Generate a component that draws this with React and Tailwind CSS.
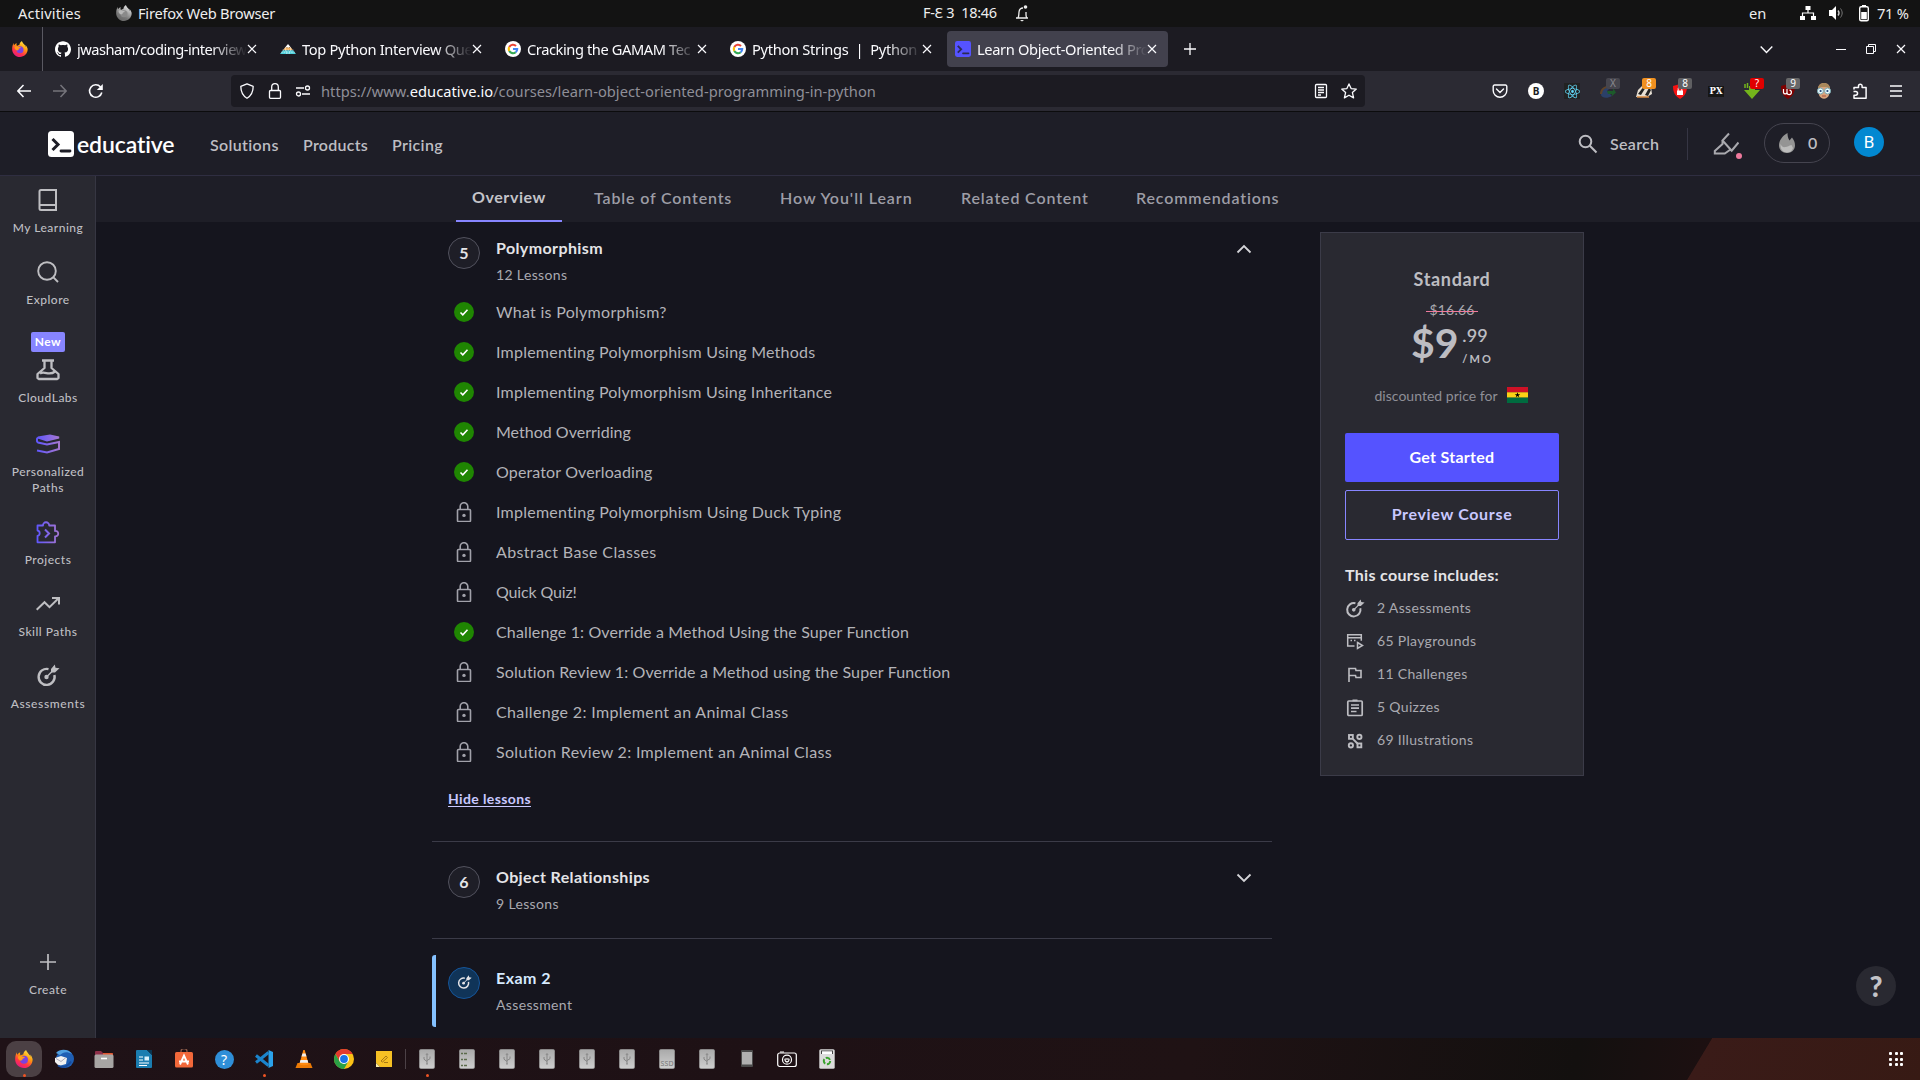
import React from "react";
import { SiReact, SiGithub } from "react-icons/si";

const lessons = [
  ["What is Polymorphism?", true, "tracking-[0.28px]"],
  ["Implementing Polymorphism Using Methods", true, "tracking-[0.23px]"],
  ["Implementing Polymorphism Using Inheritance", true, "tracking-[0.22px]"],
  ["Method Overriding", true, "tracking-[0.01px]"],
  ["Operator Overloading", true, "tracking-[0.13px]"],
  ["Implementing Polymorphism Using Duck Typing", false, "tracking-[0.25px]"],
  ["Abstract Base Classes", false, "tracking-[0.37px]"],
  ["Quick Quiz!", false, "tracking-[-0.14px]"],
  ["Challenge 1: Override a Method Using the Super Function", true, "tracking-[0.14px]"],
  ["Solution Review 1: Override a Method using the Super Function", false, "tracking-[0.13px]"],
  ["Challenge 2: Implement an Animal Class", false, "tracking-[0.36px]"],
  ["Solution Review 2: Implement an Animal Class", false, "tracking-[0.31px]"],
];

function Firefox({ className, gray }) {
  const id = gray ? "fxg" : "fxc";
  return (
    <svg viewBox="0 0 24 24" className={className}>
      <defs>
        <linearGradient id={id} x1="0.8" y1="0" x2="0.25" y2="1">
          <stop offset="0" stopColor={gray ? "#eeeeee" : "#fff44f"} />
          <stop offset="0.4" stopColor={gray ? "#aaaaaa" : "#ff980e"} />
          <stop offset="0.7" stopColor={gray ? "#777777" : "#ff3647"} />
          <stop offset="1" stopColor={gray ? "#666666" : "#e31587"} />
        </linearGradient>
      </defs>
      <path
        fill={`url(#${id})`}
        d="M22.5 9.5c-.5-1.500-1.600-3-2.500-3.500.7 1.300 1 2.500 1.100 3.300C19.800 6.100 17.300 4.800 15.500 1.500 15 .7 14.900.2 14.900 0c-2.800 1.600-3.800 4.600-3.900 6.100-1.300.1-2.500.6-3.500 1.300C6.600 6 6.600 4.300 7 3 5.300 3.800 4 5 3 6.200 2.500 5.600 2.500 3.500 2.600 3 1.700 4 .2 7.500.2 12.300.2 18.800 5.500 24 12 24c6 0 11.500-4.700 11.500-11.500 0-1-.4-2-1-3z"
      />
      <circle cx="12" cy="13" r="5.300" fill={gray ? "#8a8a8a" : "#7a42e0"} />
      <path fill={gray ? "#b8b8b8" : "#ff9a1a"} d="M4 8.500c2.500-1.300 5-.8 6.500.5 1 .1 2.300-.1 2.700.7-.3 1-2.500 1.500-3 2 .2 1.800-1.700 2-2.200 2.600C5 13.500 3.500 11 4 8.500z" />
    </svg>
  );
}

function Google({ className }) {
  return (
    <svg viewBox="0 0 16 16" className={className}>
      <circle cx="8" cy="8" r="8" fill="#fff" />
      <g fill="none" strokeWidth="2.100">
        <path stroke="#ea4335" d="M4.300 6A4.200 4.200 0 0 1 11 5" />
        <path stroke="#fbbc05" d="M4.300 10a4.200 4.200 0 0 1 0-4" />
        <path stroke="#34a853" d="M4.300 10a4.200 4.200 0 0 0 6.400 1.200" />
        <path stroke="#4285f4" d="M8 8h4.200a4.200 4.200 0 0 1-1.500 3.200" />
      </g>
    </svg>
  );
}

function Pyramid({ className }) {
  return (
    <svg viewBox="0 0 16 16" className={className}>
      <path d="M8 3l2.500 3h-5z" fill="#fff" />
      <path d="M5.200 6.300h5.600l2 2.700H3.200z" fill="#f0b060" />
      <path d="M3 9.300h10l3 3.700H0z" fill="#4fd0dc" />
      <path d="M2.500 9.100h11M1.200 11.200h13.600M5 6.500h6M5 7l2 6M11 7L9 13" stroke="#fff" strokeWidth=".6" strokeDasharray="1.500 1" />
    </svg>
  );
}

function EducativeMark({ className, bg, fg }) {
  return (
    <svg viewBox="0 0 26 26" className={className}>
      <rect width="26" height="26" rx="3.500" fill={bg} />
      <path d="M4.500 8l5.500 5.500-5.500 5.500" fill="none" stroke={fg} strokeWidth="3" />
      <path d="M13 20h9" stroke={fg} strokeWidth="2.800" strokeLinecap="round" />
    </svg>
  );
}

function X({ className = "h-[10px] w-[10px]" }) {
  return (
    <svg viewBox="0 0 10 10" className={className} stroke="#fbfbfe" strokeWidth="1.200" fill="none">
      <path d="M1 1l8 8M9 1L1 9" />
    </svg>
  );
}

function Line({ children, className = "h-6 w-6", sw = 2, vb = "0 0 24 24" }) {
  return (
    <svg viewBox={vb} className={className} fill="none" stroke="currentColor" strokeWidth={sw}>
      {children}
    </svg>
  );
}

function Target({ className = "h-6 w-6" }) {
  return (
    <svg viewBox="0 0 24 24" className={className} fill="none" stroke="currentColor">
      <path d="M12.500 5.100A8 8 0 1 0 18.400 11" strokeWidth="2.400" />
      <circle cx="10.500" cy="13" r="2.200" fill="currentColor" stroke="none" />
      <path d="M10.500 13l6-6" strokeWidth="1.500" />
      <path d="M15 8.500V5l3.800-4.500.7 3.200 4 .6L19 8.500z" fill="currentColor" stroke="none" />
    </svg>
  );
}

function Tab({ icon, title, active, track }) {
  return (
    <div className={`flex h-9 w-[221px] items-center rounded pl-2 ${active ? "bg-[#42414d]" : ""}`}>
      {icon}
      <div
        className={`ml-[6px] w-[170px] whitespace-pre text-[14.67px] leading-6 text-[#fbfbfe] [mask-image:linear-gradient(to_right,black_79%,transparent_100%)] ${track}`}
      >
        {title}
      </div>
      <div className="ml-auto mr-[11px] shrink-0">
        <X />
      </div>
    </div>
  );
}

function SystemBar() {
  return (
    <div className="flex h-[27px] items-center bg-[#131313] pb-px text-[14.67px] text-[#eeeeee]">
      <div className="w-[98px] pl-[18px] tracking-[0.19px]">Activities</div>
      <div className="flex w-[824px] items-center pl-[18px]">
        <Firefox gray className="h-4 w-4" />
        <span className="ml-[6px] whitespace-nowrap tracking-[-0.25px]">Firefox Web Browser</span>
      </div>
      <div className="flex w-[827px] items-center whitespace-pre">
        <span className="w-[76px] pl-px text-[14.500px] tracking-[-0.3px]">F-Ɛ 3  18:46</span>
        <Line className="ml-[17px] h-[18px] w-[14px]" sw={1.300} vb="0 0 14 18">
          <path d="M1 14h12M3 14c1-2 .7-3 1-6 .3-2.500 1-4 4-4M11 8v3c0 1 .3 2 .8 3" />
          <circle cx="10.500" cy="3" r="1.800" fill="currentColor" stroke="none" />
          <path d="M5 16h4l-2 1.500z" fill="currentColor" stroke="none" />
        </Line>
      </div>
      <span className="w-[51px]">en</span>
      <svg viewBox="0 0 16 16" className="h-4 w-4" fill="#fff">
        <path d="M5.500 1h5v4h-5zM0 11h5v4H0zM11 11h5v4h-5z" />
        <path d="M8 5v3M2.500 11V8h11v3" stroke="#fff" strokeWidth="1.200" fill="none" />
      </svg>
      <svg viewBox="0 0 16 16" className="ml-3 h-4 w-4" fill="#fff">
        <path d="M1 5h3l4-4v14l-4-4H1z" />
        <path d="M10 5.500c1.300 1.500 1.300 3.500 0 5" stroke="#ccc" fill="none" strokeWidth="1.300" />
        <path d="M12.500 3.500c2.200 3 2.200 6 0 9" stroke="#777" fill="none" />
      </svg>
      <svg viewBox="0 0 12 18" className="ml-[14px] h-[18px] w-3" fill="none">
        <rect x="1.700" y="2.700" width="8.600" height="14" rx="1.500" stroke="#fff" strokeWidth="1.400" />
        <path d="M4 1h4v2H4zM3.200 8h5.600v7.300H3.200z" fill="#fff" />
      </svg>
      <span className="ml-[7px] whitespace-nowrap tracking-[-0.3px]">71 %</span>
    </div>
  );
}

function TabBar() {
  return (
    <div className="flex h-11 items-center bg-[#1c1b22]">
      <div className="flex h-full w-[43px] items-center border-r border-[#5a5962] pl-3">
        <Firefox className="h-4 w-4" />
      </div>
      <div className="ml-1 flex items-center gap-1">
        <Tab icon={<SiGithub className="h-4 w-4 shrink-0 text-white" />} title="jwasham/coding-interview" track="tracking-[-0.5px]" />
        <Tab icon={<Pyramid className="h-4 w-4 shrink-0" />} title="Top Python Interview Que" track="tracking-[-0.32px]" />
        <Tab icon={<Google className="h-4 w-4 shrink-0" />} title="Cracking the GAMAM Tec" track="tracking-[-0.42px]" />
        <Tab icon={<Google className="h-4 w-4 shrink-0" />} title="Python Strings  |  Python E" track="tracking-[-0.3px]" />
        <Tab active icon={<EducativeMark className="h-4 w-4 shrink-0" bg="#5553ff" fg="#2b2a55" />} title="Learn Object-Oriented Pro" track="tracking-[-0.35px]" />
      </div>
      <Line className="ml-4 h-3 w-3 text-[#fbfbfe]" sw={1.300} vb="0 0 12 12">
        <path d="M6 0v12M0 6h12" />
      </Line>
      <Line className="ml-auto h-[13px] w-[13px] text-[#fbfbfe]" sw={1.400} vb="0 0 13 13">
        <path d="M.7 3.500l5.800 6 5.800-6" />
      </Line>
      <div className="ml-[63px] h-px w-[10px] bg-[#fbfbfe]" />
      <Line className="ml-5 h-[10px] w-[10px] text-[#fbfbfe]" sw={1} vb="0 0 10 10">
        <path d="M.5 2.500h7v7h-7zM2.500 2.500v-2h7v7h-2" />
      </Line>
      <div className="ml-5 mr-[14px] h-[10px] w-[10px]">
        <X />
      </div>
    </div>
  );
}

function Ext({ children, badge, badgeClass = "" }) {
  return (
    <div className="relative flex h-5 w-9 items-center justify-center">
      {children}
      {badge && (
        <span className={`absolute -top-[3px] left-[16px] h-[11px] w-[14px] rounded-[2px] text-center text-[10px] leading-[11px] ${badgeClass}`}>
          {badge}
        </span>
      )}
    </div>
  );
}

function NavBar() {
  return (
    <div className="flex h-[41px] items-center border-b border-[#0c0c0d] bg-[#2b2a33] text-[#fbfbfe]">
      <div className="flex w-[231px] items-center gap-[22px] pl-[17px]">
        <Line className="h-[14px] w-[14px]" sw={1.500} vb="0 0 14 14">
          <path d="M14 7H1M6.500 1L.9 7l5.600 6" />
        </Line>
        <Line className="h-[14px] w-[14px] text-[#75747b]" sw={1.500} vb="0 0 14 14">
          <path d="M0 7h13M7.500 1l5.600 6-5.600 6" />
        </Line>
        <Line className="-ml-px h-4 w-4" sw={1.600} vb="0 0 16 16">
          <path d="M13.800 9.500A6.200 6.200 0 1 1 12.500 4" />
          <path d="M14.800 1v6h-6z" fill="currentColor" stroke="none" />
        </Line>
      </div>
      <div className="flex h-8 w-[1134px] items-center rounded bg-[#1c1b22] pl-2">
        <Line className="h-4 w-4" sw={1.300} vb="0 0 16 16">
          <path d="M8 .8l6.200 2.500c0 6-2 9.500-6.200 12-4.200-2.500-6.200-6-6.200-12z" strokeLinejoin="round" />
        </Line>
        <Line className="ml-3 h-4 w-4" sw={1.300} vb="0 0 16 16">
          <rect x="2.500" y="7.500" width="11" height="7.800" rx="1" />
          <path d="M4.700 7.500V4a3.300 3.300 0 0 1 6.600 0v3.500" />
        </Line>
        <Line className="ml-3 h-4 w-4" sw={1.300} vb="0 0 16 16">
          <path d="M1 5h8M7 11h8" />
          <circle cx="12.500" cy="5" r="2" />
          <circle cx="3.500" cy="11" r="2" />
        </Line>
        <span className="ml-[10px] whitespace-nowrap text-[14.67px] tracking-[0.03px] text-[#8f8f98]">
          https://www.<span className="text-[#fbfbfe]">educative.io</span>/courses/learn-object-oriented-programming-in-python
        </span>
        <Line className="ml-auto h-4 w-4" sw={1.300} vb="0 0 16 16">
          <rect x="2.500" y="1.500" width="11" height="13" rx="1" />
          <path d="M5 4.500h6M5 7h6M5 9.500h6M5 12h3" />
        </Line>
        <Line className="ml-3 mr-2 h-4 w-4" sw={1.300} vb="0 0 16 16">
          <path strokeLinejoin="round" d="M8 .9l2.100 4.700 5.200.5-3.900 3.500 1.200 5.300L8 12.200l-4.600 2.700 1.200-5.300L.7 6.100l5.200-.5z" />
        </Line>
      </div>
      <div className="ml-auto mr-[6px] flex items-center">
        <Ext>
          <Line className="h-4 w-4" sw={1.400} vb="0 0 16 16">
            <path d="M2.500 2h11a1.300 1.300 0 0 1 1.300 1.300V7.500a6.800 6.800 0 0 1-13.600 0V3.300A1.300 1.300 0 0 1 2.500 2zM4.500 6L8 9.500 11.500 6" strokeLinecap="round" />
          </Line>
        </Ext>
        <Ext>
          <span className="h-4 w-4 rounded-full bg-white text-center text-[10px] font-bold leading-4 text-[#1c1b22]">B</span>
        </Ext>
        <Ext>
          <span className="flex h-4 w-4 items-center justify-center bg-[#222]">
            <SiReact className="h-[15px] w-[15px] text-[#61dafb]" />
          </span>
        </Ext>
        <Ext badge="X" badgeClass="bg-[#46454d] text-[#8a8a90]">
          <svg viewBox="0 0 16 16" className="h-4 w-4">
            <path d="M1 12C1 6 5 3 11 4L7 8l5 5c-5 3-10 2-11-1z" fill="#2b4068" />
            <path d="M1 11C1 6 5 3 11 4" stroke="#5f4328" strokeWidth="2" fill="none" />
            <path d="M7 8h6V5l3 4.500-4 3.500v-2H8z" fill="#1d5a2b" />
          </svg>
        </Ext>
        <Ext badge="8" badgeClass="bg-[#f09020] text-white">
          <svg viewBox="0 0 16 16" className="h-4 w-4">
            <path d="M0 14L2 7l5-5 8 2 1 7-5 3z" fill="#e8e0d4" />
            <path d="M2 11L8 3l2 1-5 8zM9 12l4-7 2 2-3 6z" fill="#222" />
            <path d="M1 14h12" stroke="#d98a40" strokeWidth="1.500" />
          </svg>
        </Ext>
        <Ext badge="8" badgeClass="bg-[#5f5f62] text-white">
          <svg viewBox="0 0 16 16" className="h-4 w-4">
            <path d="M1 3l7-2 7 2c0 6-2 10-7 13C3 13 1 9 1 3z" fill="#f41212" />
            <path d="M5 7.500h6V12H5z" fill="#fff" />
            <path d="M6.200 8V5.500a1.800 1.800 0 0 1 3.600 0V8" stroke="#fff" fill="none" />
          </svg>
        </Ext>
        <Ext>
          <span className="h-[11px] w-4 bg-[#161616] text-center font-['DejaVu_Serif',serif] text-[8.500px] font-bold leading-[11px]">PX</span>
        </Ext>
        <Ext badge="?" badgeClass="bg-[#e00000] text-white">
          <svg viewBox="0 0 16 16" className="h-4 w-4">
            <path d="M5 3h6v4h5l-8 9-8-9h5z" fill="#74b51c" />
            <path d="M1 1v4M3.500 0v5" stroke="#74b51c" strokeWidth="1.500" />
          </svg>
        </Ext>
        <Ext badge="9" badgeClass="bg-[#68686a] text-white">
          <svg viewBox="0 0 16 16" className="h-4 w-4">
            <path d="M1 3l7-2 7 2c0 6-2 10-7 13C3 13 1 9 1 3z" fill="#800000" />
            <path d="M3.500 6v3.500a1.800 1.800 0 0 0 3.500 0V6v3.500a2.200 2.200 0 1 0 2.500-2.300" stroke="#fff" strokeWidth="1.200" fill="none" />
          </svg>
        </Ext>
        <Ext>
          <svg viewBox="0 0 16 16" className="h-4 w-4">
            <path d="M2 6c0-8 12-8 12 0l-1 6c-2 5-8 5-10 0z" fill="#d9a37c" />
            <path d="M2 6c0-8 12-8 12 0l-3-2H5z" fill="#a9885c" />
            <circle cx="4.400" cy="8" r="3" fill="#e9fbff" stroke="#7ba7b0" />
            <circle cx="11.600" cy="8" r="3" fill="#e9fbff" stroke="#7ba7b0" />
            <circle cx="4.600" cy="8" r="1.100" fill="#247" />
            <circle cx="11.400" cy="8" r="1.100" fill="#247" />
            <path d="M6 13h4" stroke="#a8503c" />
          </svg>
        </Ext>
        <Ext>
          <Line className="h-4 w-4" sw={1.500} vb="0 0 16 16">
            <path strokeLinejoin="round" d="M2 6.500V4.500h4.500V3a1.800 1.800 0 0 1 3.600 0v1.500h4v10.700H2v-3h1.700a1.700 1.700 0 0 0 0-3.700H1.500" />
          </Line>
        </Ext>
        <Ext>
          <Line className="h-3 w-3" sw={1.300} vb="0 0 12 12">
            <path d="M0 1h12M0 6h12M0 11h12" />
          </Line>
        </Ext>
      </div>
    </div>
  );
}

function SiteHeader() {
  return (
    <header className="flex h-16 items-center border-b border-[#2f2e41] bg-[#1e1e27] text-[16px] font-semibold text-[#bdbdc2]">
      <EducativeMark className="ml-12 h-[26px] w-[26px]" bg="#ffffff" fg="#1e1e27" />
      <span className="ml-[3px] w-[97px] text-[23px] leading-7 tracking-[-0.12px] text-white">educative</span>
      <span className="ml-9 w-[93px] pt-[2px] tracking-[0.35px]">Solutions</span>
      <span className="w-[89px] pt-[2px] tracking-[0.26px]">Products</span>
      <span className="pt-[2px] tracking-[0.36px]">Pricing</span>
      <Line className="ml-auto h-5 w-5" sw={2} vb="0 0 20 20">
        <circle cx="7.500" cy="7.500" r="5.800" />
        <path d="M11.800 11.800l6.700 6.700" />
      </Line>
      <span className="ml-3 w-[49px] tracking-[0.3px]">Search</span>
      <div className="ml-7 h-8 w-px bg-[#363644]" />
      <div className="relative ml-[25px] h-6 w-[26px] text-[#a9a9ae]">
        <Line className="h-6 w-[26px]" sw={2} vb="0 0 26 24">
          <path d="M16 1.500L9.500 8.500l9 10M18 19.500L25.500 10.500M9.500 8.500V12l-7.700 7v2.500h10l5-3.500" />
        </Line>
        <span className="absolute -bottom-[3px] right-[-3px] h-[6px] w-[6px] rounded-full bg-[#ef7a9d]" />
      </div>
      <div className="ml-[25px] flex h-10 w-[66px] -translate-y-px items-center rounded-full border border-[#45444f] pl-[14px]">
        <svg viewBox="0 0 16 20" className="h-5 w-4">
          <path d="M8.500 0c0 3 .5 5 2 7.500L13 4.500c2 2.500 3 5 3 8 0 4.500-3.500 7.500-8 7.500s-8-3-8-7.500C0 8 3 3 8.500 0z" fill="#949494" />
          <path d="M1.500 11c1.500 3 3 3.500 5 3 2 0 3.500-1.500 6-2l1.500 3c-1 3-3 4.500-6 4.500-4 0-7-3.500-6.500-8.500z" fill="#bcbcbc" />
        </svg>
        <span className="ml-[13px]">0</span>
      </div>
      <div className="ml-6 mr-[36px] h-[30px] w-[30px] -translate-y-[2px] rounded-full bg-[#0288d1] text-center font-['Roboto',sans-serif] text-[17px] font-normal leading-[30px] text-white">B</div>
    </header>
  );
}

function SideItem({ icon, label, height = "h-[72px]", badge, track = "tracking-[0.5px]" }) {
  return (
    <div className={`flex flex-col items-center pl-px ${height}`}>
      {badge && (
        <span className="mb-[6px] h-5 w-[34px] rounded-[2px] bg-[#8785ff] text-center text-[12px] font-bold leading-5 tracking-[0.5px] text-white">{badge}</span>
      )}
      <div className="flex h-6 items-center">{icon}</div>
      <span className={`mt-2 text-center text-[12px] font-medium leading-4 ${track}`}>{label}</span>
    </div>
  );
}

function Sidebar() {
  return (
    <aside className="flex h-[862px] w-24 shrink-0 flex-col border-r border-[#363642] bg-[#292931] pt-3 text-[#bebec2]">
      <SideItem
        label="My Learning"
        icon={
          <Line sw={2}>
            <path d="M3.500 3.500A1.500 1.500 0 0 1 5 2H20v20H5A1.500 1.500 0 0 1 3.500 20.500zM4 17h16" />
          </Line>
        }
      />
      <SideItem
        label="Explore"
        icon={
          <Line sw={1.900}>
            <circle cx="11" cy="11" r="8.800" />
            <path d="M17.200 17.200L22 22" />
          </Line>
        }
      />
      <SideItem
        badge="New"
        height="h-[100px]"
        label="CloudLabs"
        icon={
          <Line sw={2.300}>
            <path strokeLinejoin="round" d="M6 2.500h12M8.500 3v7L1.500 16v4l1.500 1h18l1.500-1V16l-7-6V3M4 15.500c5-3 9 3 15-2" />
          </Line>
        }
      />
      <SideItem
        height="h-[88px]"
        label={<>Personalized<br />Paths</>}
        icon={
          <svg viewBox="0 0 24 24" className="h-6 w-6" fill="none" stroke="url(#pg)" strokeWidth="2">
            <defs>
              <linearGradient id="pg" gradientUnits="userSpaceOnUse" x1="0" y1="12" x2="24" y2="12">
                <stop stopColor="#5d55ff" />
                <stop offset="1" stopColor="#a878d0" />
              </linearGradient>
            </defs>
            <path d="M2 5.500L14 3.500l9 2-12 3z" fill="url(#pg)" />
            <path d="M2 5.500c-1.500 1-1.500 4 0 5l9 2 12-2.500v7l-12 3.500-10-2" />
          </svg>
        }
      />
      <SideItem
        label="Projects"
        icon={
          <svg viewBox="0 0 24 24" className="h-6 w-6" fill="none" stroke="url(#pg)" strokeWidth="1.800">
            <path strokeLinejoin="round" d="M1.500 5.500h5.500a3 3 0 0 1 6.200-.3v.3h5.800v5.500a2.700 2.700 0 1 1 0 5.300v6H1.500v-6.500a2.700 2.700 0 0 0 0-5.300z" />
            <path d="M9 9.500l4 4-4 4" strokeWidth="2" />
          </svg>
        }
      />
      <SideItem
        label="Skill Paths"
        icon={
          <Line sw={2}>
            <path d="M.7 17.700l7.800-7.500 5 5L22.800 6M16 6h7v6.500" />
          </Line>
        }
      />
      <SideItem label="Assessments" track="tracking-[0.62px]" icon={<Target />} />
      <div className="mt-auto">
        <SideItem
          height="h-[88px]"
          label="Create"
          icon={
            <Line sw={1.700}>
              <path d="M12 4v16M4 12h16" />
            </Line>
          }
        />
      </div>
    </aside>
  );
}

function Check() {
  return (
    <svg viewBox="0 0 20 20" className="h-5 w-5">
      <circle cx="10" cy="10" r="10" fill="#1f8602" />
      <path d="M6.500 10.500l2.300 2.300 4.700-5" fill="none" stroke="#fff" strokeWidth="1.600" />
    </svg>
  );
}

function Lock() {
  return (
    <Line className="h-5 w-5 text-[#a1a1aa]" sw={1.600} vb="0 0 20 20">
      <rect x="3.500" y="7.500" width="13" height="12" rx="1" />
      <path d="M6.200 7.500V4.500a3.800 3.800 0 0 1 7.600 0v3" />
      <circle cx="10" cy="13.400" r="1.700" fill="currentColor" stroke="none" />
    </Line>
  );
}

function SectionHead({ mark, title, sub, titleClass, markClass = "border-[#52525e] bg-[#1e1e27]", arrow }) {
  return (
    <div className="flex items-start pl-4">
      <div className={`mt-[5px] flex h-8 w-8 items-center justify-center rounded-full border pb-px text-[16px] font-bold text-[#e4e4e7] ${markClass}`}>{mark}</div>
      <div className="ml-4">
        <div className={`text-[16px] font-bold leading-8 ${titleClass}`}>{title}</div>
        <div className="text-[14px] leading-[22px] tracking-[0.35px] text-[#a9a9b0]">{sub}</div>
      </div>
      {arrow && (
        <Line className="ml-auto mr-5 mt-[9px] h-4 w-4 text-[#d4d4d8]" sw={1.800} vb="0 0 16 16">
          <path d={arrow === "up" ? "M1.500 11.500L8 5l6.500 6.500" : "M1.500 4.500L8 11l6.500-6.500"} />
        </Line>
      )}
    </div>
  );
}

function Curriculum() {
  return (
    <section className="w-[840px] pt-[10px]">
      <SectionHead mark="5" title="Polymorphism" sub="12 Lessons" titleClass="tracking-[0.39px] text-[#e4e4e7]" arrow="up" />
      <ul className="mt-[6px]">
        {lessons.map(([name, done, track]) => (
          <li key={name} className="flex h-10 items-center pl-[22px] text-[16px] text-[#b3b3b8]">
            {done ? <Check /> : <Lock />}
            <span className={`ml-[22px] whitespace-nowrap ${track}`}>{name}</span>
          </li>
        ))}
      </ul>
      <div className="ml-4 mt-4 text-[14px] font-bold leading-[22px] tracking-[0.38px] text-[#c9c8ff] underline underline-offset-2">Hide lessons</div>
      <div className="mt-[31px] border-t border-[#3b3b48] pt-[19px]">
        <SectionHead mark="6" title="Object Relationships" sub="9 Lessons" titleClass="tracking-[0.36px] text-[#e4e4e7]" arrow="down" />
      </div>
      <div className="mt-[23px] h-px bg-[#3b3b48]" />
      <div className="mt-4 h-[72px] rounded-l-[3px] border-l-4 border-[#84c1ff] pt-[7px]">
        <div className="-ml-1">
          <SectionHead mark={<Target className="h-[15px] w-[15px]" />} title="Exam 2" sub="Assessment" titleClass="tracking-[0.46px] text-[#d6eaff]" markClass="border-[#15559a] bg-[#103458] text-[#d6eaff]" />
        </div>
      </div>
    </section>
  );
}

const includes = [
  ["2 Assessments", <Target className="h-5 w-5" />],
  [
    "65 Playgrounds",
    <Line className="h-5 w-5" sw={1.500} vb="0 0 20 20">
      <path d="M9.500 14H2.700V2.700h13.600v6M2.700 5.800h13.600M5.500 8.500h1.500M9 8.500h1.500" />
      <path d="M12.500 10.500l5 3-5 3z" />
    </Line>,
  ],
  [
    "11 Challenges",
    <Line className="h-5 w-5" sw={1.600} vb="0 0 20 20">
      <path d="M4 17V3.500h6.500l.5 2h5v7h-5l-.5-2H4" />
    </Line>,
  ],
  [
    "5 Quizzes",
    <Line className="h-5 w-5" sw={1.700} vb="0 0 20 20">
      <rect x="2.800" y="3" width="14.400" height="14.500" rx="1" />
      <path d="M7.500 2.300h5M6 7h8M6 10.200h8M6 13.500h5.500" />
    </Line>,
  ],
  [
    "69 Illustrations",
    <Line className="h-5 w-5" sw={1.900} vb="0 0 20 20">
      <rect x="4" y="4" width="3.800" height="3.800" />
      <rect x="12.500" y="12.500" width="3.800" height="3.800" />
      <circle cx="14.400" cy="5.900" r="2.100" />
      <circle cx="5.900" cy="14.400" r="2.100" />
      <path d="M7.800 7.800l4.700 4.700" />
    </Line>,
  ],
];

function PriceCard() {
  return (
    <aside className="ml-12 mt-[10px] h-[544px] w-[264px] border border-[#3b3b48] bg-[#292931] px-6 pt-8 text-[#bdbdc2]">
      <div className="text-center text-[18px] font-bold leading-7 tracking-[0.69px]">Standard</div>
      <div className="mt-[5px] flex justify-center">
        <span className="relative px-1 text-[14px] leading-6 tracking-[0.18px] text-[#a9a9b0]">
          $16.66
          <span className="absolute inset-x-0 top-[13px] h-px bg-[#ef7a9d]" />
        </span>
      </div>
      <div className="flex h-[44px] justify-center">
        <span className="text-[41px] font-bold leading-[42px] tracking-[-0.2px]">$9</span>
        <span className="ml-1 flex flex-col">
          <span className="text-[18px] font-semibold leading-[26px] tracking-[0.2px]">.99</span>
          <span className="mt-[3px] text-[11px] font-bold leading-4 tracking-[2.100px]">/MO</span>
        </span>
      </div>
      <div className="mt-[18px] flex items-center justify-center pr-[2px] text-[14px] leading-6 tracking-[0.02px] text-[#8f8f97]">
        discounted price for
        <svg viewBox="0 0 21 16" className="ml-[9px] h-4 w-[21px] -translate-y-px">
          <path d="M0 0h21v5.400H0z" fill="#ce1126" />
          <path d="M0 5.300h21v5.400H0z" fill="#fcd116" />
          <path d="M0 10.600h21V16H0z" fill="#006b3f" />
          <path d="M10.500 5.300l.7 1.900h2l-1.600 1.200.6 1.900-1.700-1.200-1.700 1.200.6-1.900-1.600-1.200h2z" />
        </svg>
      </div>
      <button className="mt-[25px] h-[49px] w-[214px] rounded-[2px] bg-[#5553ff] pb-[2px] text-[16px] font-bold tracking-[0.29px] text-white">Get Started</button>
      <button className="mt-2 h-[50px] w-[214px] rounded-[2px] border border-[#8785ff] pb-[2px] text-[16px] font-bold tracking-[0.67px] text-[#c9c8ff]">Preview Course</button>
      <div className="mt-[23px] text-[16px] font-bold leading-6 tracking-[0.32px] text-[#e4e4e7]">This course includes:</div>
      <ul className="mt-[5px]">
        {includes.map(([label, icon]) => (
          <li key={label} className="flex h-[33px] items-center text-[14px] tracking-[0.32px] text-[#a9a9b0]">
            <span className="text-[#bdbdc2]">{icon}</span>
            <span className="ml-3 pb-[2px]">{label}</span>
          </li>
        ))}
      </ul>
    </aside>
  );
}

function Usb({ kind, dot }) {
  return (
    <div className="relative flex h-[42px] w-10 items-center justify-center">
      <svg viewBox="0 0 16 20" className="h-5 w-4">
        <defs>
          <linearGradient id="dk" x1="0" y1="0" x2="0" y2="1">
            <stop stopColor="#a9a9a9" />
            <stop offset="1" stopColor="#cfcfcf" />
          </linearGradient>
        </defs>
        <rect x=".3" y=".3" width="15.400" height="19.400" rx="2" fill="url(#dk)" stroke="#8d8d8d" strokeWidth=".6" />
        {!kind && <path d="M8 5v10M5 8v2.200L8 12.500M11 7.500v2.200L8 11.500M7 5.800L8 4.500l1 1.300M7.200 15h1.600" stroke="#858585" strokeWidth="1" fill="none" />}
        {kind === "list" && <path d="M2 4.500h2M5 4.500h3M2 10.500h2M5 10.500h3M2 16.500h2M5 16.500h3" stroke="#5b6b4b" strokeWidth="1.300" />}
        {kind === "ssd" && <text x="1.500" y="17" fontSize="7" fill="#777" textLength="13">SSD</text>}
      </svg>
      {dot && <span className="absolute bottom-[5px] h-[3px] w-[3px] translate-y-[2px] rounded-full bg-[#f05423]" />}
    </div>
  );
}

function DockItem({ children, active, dot }) {
  return (
    <div className="relative flex h-[42px] w-10 items-center justify-center">
      <div className={`flex h-9 w-9 items-center justify-center rounded-[10px] ${active ? "bg-[#4b4044]" : ""}`}>{children}</div>
      {dot && <span className="absolute bottom-[5px] h-[3px] w-[3px] translate-y-[2px] rounded-full bg-[#f05423]" />}
    </div>
  );
}

function Dock() {
  const s = "h-5 w-5";
  return (
    <footer className="flex h-[42px] bg-[linear-gradient(100deg,#1f1217_0%,#1e1115_40%,#1f1214_62%,#13100f_82%,#1d1011_89%)]">
      <div className="flex w-full items-center bg-[linear-gradient(121deg,transparent_0,transparent_88%,#3a1b18_88.050%,#371a14_100%)] pl-1">
        <DockItem active dot><Firefox className="h-[18px] w-[18px]" /></DockItem>
        <DockItem>
          <svg viewBox="0 0 20 20" className={s}>
            <circle cx="11" cy="10" r="9" fill="#1f5fb4" />
            <path d="M2 4C6-1 15 0 18 5c-5-3-9-2-12 1z" fill="#4f9fe0" />
            <path d="M1 9l6-2 6 2-1 6-7 2-4-4z" fill="#f2f2f2" />
            <path d="M2 9.500l5 3 5-4" stroke="#aab" fill="none" />
            <path d="M4 16.500c5 3 10 1 13-4" stroke="#164a9b" strokeWidth="2" fill="none" />
          </svg>
        </DockItem>
        <DockItem>
          <svg viewBox="0 0 20 20" className={s}>
            <path d="M1 3a1 1 0 0 1 1-1h5l2 2h9a1 1 0 0 1 1 1v5H1z" fill="#8d2f48" />
            <path d="M9 4h9a1 1 0 0 1 1 1v2H9z" fill="#e0562f" />
            <rect x=".5" y="5.500" width="19" height="13.500" rx="1.500" fill="#a7a5a3" />
            <path d="M7 9.500h6" stroke="#fff" strokeWidth="1.600" />
          </svg>
        </DockItem>
        <DockItem>
          <svg viewBox="0 0 20 20" className={s}>
            <path d="M3 1h10l5 5v12a1 1 0 0 1-1 1H3a1 1 0 0 1-1-1V2a1 1 0 0 1 1-1z" fill="#1b7db0" />
            <path d="M13 1h5v5z" fill="#0a3550" />
            <path d="M5 8h4M5 11h4M5 14h10M5 16.500h8" stroke="#fff" strokeWidth="1.200" />
            <path d="M10.500 7.500h4.500v4h-4.500z" fill="#d9f0fb" />
          </svg>
        </DockItem>
        <DockItem>
          <svg viewBox="0 0 20 20" className={s}>
            <path d="M7 4V2.500a3 3 0 0 1 6 0V4" stroke="#8b5a48" fill="none" strokeWidth="1.300" />
            <rect x="1" y="3" width="18" height="15.500" rx="1.500" fill="#f2683a" />
            <path d="M6 15.500L10 6.500l4 9M5 12.500h10" stroke="#fff" strokeWidth="1.900" fill="none" />
          </svg>
        </DockItem>
        <DockItem>
          <span className="h-[19px] w-[19px] rounded-full bg-[#2f8fd8] text-center text-[14px] leading-[19px] text-white">?</span>
        </DockItem>
        <DockItem dot>
          <svg viewBox="0 0 20 20" className={s}>
            <path d="M14.500 1L19 3v14l-4.500 2z" fill="#2ba2ea" />
            <path d="M14.500 3.500L2 13.500M14.500 16.500L2 6.500" stroke="#1b84cc" strokeWidth="3" />
          </svg>
        </DockItem>
        <DockItem>
          <svg viewBox="0 0 20 20" className={s}>
            <path d="M3.500 14h13l2 5h-17z" fill="#ec7a05" />
            <path d="M9.300 1h1.400l4 14.500c-3 1-6.500 1-9.400 0z" fill="#ff8a10" />
            <path d="M8.500 4.500h3l1 3H7.500zM6.500 11h7l.8 2.800H5.700z" fill="#eee" />
          </svg>
        </DockItem>
        <DockItem>
          <svg viewBox="0 0 20 20" className={s}>
            <circle cx="10" cy="10" r="10" fill="#fbc116" />
            <path d="M10 5h8.660A10 10 0 0 0 1.340 5L5.700 12.500z" fill="#e33b2e" />
            <path d="M1.340 5A10 10 0 0 0 10 20l4.300-7.500H5.700z" fill="#2aa146" />
            <circle cx="10" cy="10" r="5" fill="#fff" />
            <circle cx="10" cy="10" r="3.900" fill="#1a73e8" />
          </svg>
        </DockItem>
        <DockItem>
          <svg viewBox="0 0 20 20" className={s}>
            <path d="M2 2h16v16H6l-4-4z" fill="#f6c024" />
            <path d="M2 14l4 4H2z" fill="#fff0a8" />
            <path d="M7 12l5-5 1.500 1.500-5 4.500zM10 13.500h4" stroke="#a87814" fill="none" />
          </svg>
        </DockItem>
        <div className="ml-[1px] mr-[1px] h-5 w-px bg-[#4c4146]" />
        <Usb dot />
        <Usb kind="list" />
        <Usb />
        <Usb />
        <Usb />
        <Usb />
        <Usb kind="ssd" />
        <Usb />
        <DockItem>
          <svg viewBox="0 0 14 20" className="h-5 w-[14px]">
            <rect x="1" y="1" width="12" height="17" rx="1" fill="#4a4a4a" />
            <rect x="2" y="3" width="10" height="12.500" fill="#b0b0b0" />
          </svg>
        </DockItem>
        <DockItem>
          <svg viewBox="0 0 20 18" className="h-[18px] w-5" fill="none" stroke="#fff" strokeWidth="1.200">
            <rect x=".7" y="3" width="18.600" height="13.500" rx="2" />
            <path d="M3 2h4M8.500 8.500a2 2 0 1 0 3 0" />
            <circle cx="10" cy="9.700" r="4.500" />
            <path d="M10 8v2" />
          </svg>
        </DockItem>
        <DockItem>
          <svg viewBox="0 0 16 20" className="h-5 w-4">
            <rect x=".3" y=".3" width="15.400" height="19.400" rx="1.500" fill="#dcdcdc" />
            <path d="M2.500 2v3M13.500 2v3M2 2h12" stroke="#444" strokeWidth="1" />
            <path d="M3 2.500h10V5H3z" fill="#fff" />
            <circle cx="8" cy="12" r="3.200" fill="none" stroke="#3aa32e" strokeWidth="2" strokeDasharray="5 1.700" />
          </svg>
        </DockItem>
        <div className="ml-auto mr-[17px] grid grid-cols-3 gap-[2.500px]">
          {Array.from({ length: 9 }, (_, i) => (
            <span key={i} className="h-[3px] w-[3px] rounded-[1px] bg-white" />
          ))}
        </div>
      </div>
    </footer>
  );
}

export default function App() {
  return (
    <div className="h-[1080px] w-[1920px] overflow-hidden bg-[#15151e] font-['Noto_Sans',sans-serif]">
      <SystemBar />
      <TabBar />
      <NavBar />
      <div className="relative font-['Lato',sans-serif]">
        <SiteHeader />
        <div className="flex h-[862px]">
          <Sidebar />
          <div className="min-w-0 flex-1">
            <nav className="flex h-[46px] items-center bg-[#1e1e27] pl-[360px] text-[16px] font-semibold text-[#9d9da6]">
              <span className="flex h-full w-[106px] items-center justify-center border-b-2 border-[#8785ff] pb-[2px] font-bold tracking-[0.58px] text-[#c4c4c9]">Overview</span>
              <span className="ml-8 w-[186px] pb-[2px] tracking-[0.84px]">Table of Contents</span>
              <span className="w-[181px] pb-[2px] tracking-[0.94px]">How You'll Learn</span>
              <span className="w-[175px] pb-[2px] tracking-[0.86px]">Related Content</span>
              <span className="pb-[2px] tracking-[0.84px]">Recommendations</span>
            </nav>
            <main className="flex items-start pl-[336px]">
              <Curriculum />
              <PriceCard />
            </main>
          </div>
        </div>
        <div className="absolute bottom-8 right-6 flex h-10 w-10 items-center justify-center rounded-full bg-[#292931] text-[28px] font-black leading-none text-[#c4c4c9]">?</div>
      </div>
      <Dock />
    </div>
  );
}
